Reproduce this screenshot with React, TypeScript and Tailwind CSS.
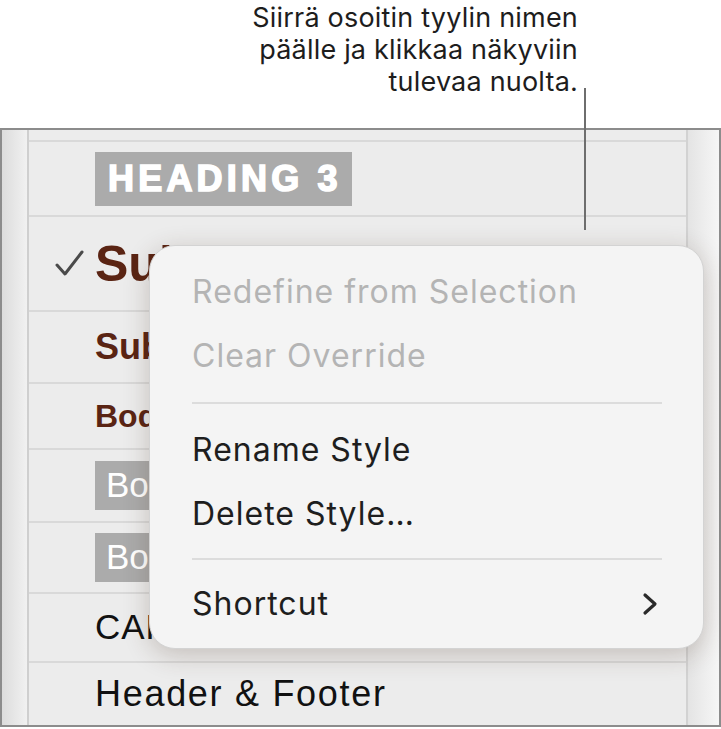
import React from "react";

const sans = { fontFamily: '"Liberation Sans", Arial, sans-serif' };

function Line() {
  return <div className="h-[2px] bg-[#d9d9d9]" />;
}

export default function App() {
  return (
    <div className="relative w-[721px] h-[729px] bg-white overflow-hidden">
      {/* Callout text */}
      <div className="h-[128px] pr-[143px] pt-[2px] text-right text-[27px] leading-[32px] text-[#1d1d1d] font-['Inter',sans-serif] tracking-[0.2px]">
        <div>Siirrä osoitin tyylin nimen</div>
        <div>päälle ja klikkaa näkyviin</div>
        <div>tulevaa nuolta.</div>
      </div>

      {/* Panel */}
      <div className="h-[599px] border-2 border-[#8c8c8c] flex">
        <div className="w-[27px] bg-gradient-to-r from-[#dcdcdc] to-[#f1f1f1] border-r-2 border-[#cfcfcf]" />
        <div className="flex-1 bg-[#ececec] flex flex-col" style={sans}>
          <div className="h-[10px]" />
          <Line />
          <div className="h-[73px] flex items-center pl-[66px]">
            <div className="h-[54px] w-[257px] bg-[#ababab] flex items-center pl-[13px] text-white text-[36px] font-bold tracking-[4.2px] [-webkit-text-stroke:1.6px_white] whitespace-nowrap">
              HEADING 3
            </div>
          </div>
          <Line />
          <div className="h-[93px] flex items-center">
            <div className="w-[66px] pl-[26px]">
              <svg width="29" height="27" viewBox="0 0 29 27">
                <path d="M2 15 L10 24 L27 2" fill="none" stroke="#4a4a4a" strokeWidth="3" strokeLinecap="round" strokeLinejoin="round" />
              </svg>
            </div>
            <div className="text-[50px] font-bold text-[#5a2413] leading-none">Subtitle</div>
          </div>
          <Line />
          <div className="h-[70px] flex items-center pl-[66px] text-[36px] font-bold text-[#5a2413]">Subtitle 2</div>
          <Line />
          <div className="h-[64px] flex items-center pl-[66px] text-[32px] font-bold text-[#5a2413]">Body Bold</div>
          <Line />
          <div className="h-[71px] flex items-center pl-[66px]">
            <div className="h-[49px] bg-[#ababab] flex items-center px-[11px] text-white text-[35px]">Body Label</div>
          </div>
          <Line />
          <div className="h-[69px] flex items-center pl-[66px]">
            <div className="h-[49px] bg-[#ababab] flex items-center px-[11px] text-white text-[35px]">Body Label 2</div>
          </div>
          <Line />
          <div className="h-[67px] flex items-center pl-[66px] text-[35px] text-[#111] tracking-[1px]">CAPTION</div>
          <Line />
          <div className="flex-1 flex items-center pl-[66px] text-[36px] text-[#111] tracking-[1.7px]">Header &amp; Footer</div>
        </div>
        <div className="w-[33px] bg-gradient-to-r from-[#e4e4e4] to-[#f6f6f6] border-l-2 border-[#d2d2d2]" />
      </div>

      {/* Callout line */}
      <div className="absolute left-[584px] top-[88px] w-[2px] h-[142px] bg-[#6e6e6e]" />

      {/* Context menu */}
      <div className="absolute left-[149px] top-[245px] w-[555px] h-[404px] rounded-[26px] bg-[#f4f4f4] border border-[#d3d3d3] shadow-[0_6px_26px_rgba(70,45,30,0.24)] pt-[14px] font-['Inter',sans-serif] text-[32px] tracking-[1px]">
        <div className="h-[64px] flex items-center pl-[42px] text-[#b4b4b4]">Redefine from Selection</div>
        <div className="h-[64px] flex items-center pl-[42px] text-[#b4b4b4]">Clear Override</div>
        <div className="h-[30px] flex items-center pl-[42px] pr-[41px]">
          <div className="h-[2px] w-full bg-[#dcdcdc]" />
        </div>
        <div className="h-[64px] flex items-center pl-[42px] text-[#1e1e1e]">Rename Style</div>
        <div className="h-[64px] flex items-center pl-[42px] text-[#1e1e1e]">Delete Style…</div>
        <div className="h-[26px] flex items-center pl-[42px] pr-[41px]">
          <div className="h-[2px] w-full bg-[#dcdcdc]" />
        </div>
        <div className="h-[64px] flex items-center justify-between pl-[42px] pr-[45px] text-[#1e1e1e]">
          <span>Shortcut</span>
          <svg width="16" height="24" viewBox="0 0 16 24">
            <path d="M3 3 L13 12 L3 21" fill="none" stroke="#2a2a2a" strokeWidth="3.2" strokeLinecap="round" strokeLinejoin="round" />
          </svg>
        </div>
      </div>
    </div>
  );
}
